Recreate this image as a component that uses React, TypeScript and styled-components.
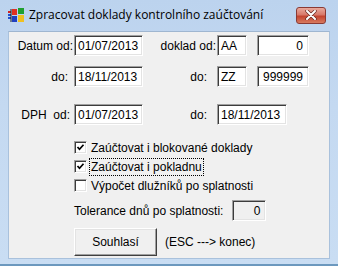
import React from 'react'
import styled, { createGlobalStyle } from 'styled-components'

const GlobalStyle = createGlobalStyle`
  html, body {
    margin: 0;
    padding: 0;
    background: #ffffff;
  }
`

const Window = styled.div`
  width: 338px;
  height: 266px;
  box-sizing: border-box;
  display: flex;
  flex-direction: column;
  background: linear-gradient(180deg, #bcd3ee 0%, #c4d9f1 40%, #c9ddf3 100%);
  border-bottom: 2px solid #6c98be;
  font-family: 'Liberation Sans', Arial, sans-serif;
  font-size: 12px;
  color: #000;
  overflow: hidden;
`

const TitleBar = styled.div`
  height: 31px;
  flex: none;
  display: flex;
  align-items: center;
  padding: 0 12px 0 8px;
  box-sizing: border-box;
`

const TitleText = styled.div`
  font-family: 'Open Sans', 'Noto Sans', sans-serif;
  font-size: 12px;
  margin-left: 4px;
  flex: 1;
  color: #000;
  margin-top: -2px;
`

const CloseButton = styled.div`
  width: 30px;
  height: 17px;
  margin-top: -1px;
  border-radius: 3px;
  border: 1px solid #8a3a34;
  box-sizing: border-box;
  background: linear-gradient(180deg, #e9a99c 0%, #d8796a 45%, #c4442f 55%, #d77a5f 100%);
  display: flex;
  align-items: center;
  justify-content: center;
`

const Client = styled.div`
  margin: 0 8px;
  height: 228px;
  background: #f0f0f0;
  border: 1px solid #a9c1dc;
  border-top-color: #9fb6d0;
  box-sizing: border-box;
  padding-top: 3px;
  display: flex;
  flex-direction: column;
`

const Row = styled.div<{ top?: number }>`
  display: flex;
  align-items: center;
  height: 21px;
  margin-top: ${({ top }) => top ?? 0}px;
`

const Label = styled.div<{ w: number; pad?: number }>`
  width: ${({ w }) => w}px;
  flex: none;
  text-align: right;
  padding-right: ${({ pad }) => pad ?? 1}px;
  box-sizing: border-box;
  white-space: pre;
`

const Field = styled.div<{ w: number; right?: boolean; disabled?: boolean; gap?: number }>`
  width: ${({ w }) => w}px;
  height: 21px;
  flex: none;
  margin-left: ${({ gap }) => gap ?? 0}px;
  box-sizing: border-box;
  border-style: solid;
  border-width: 1px;
  border-color: #a0a0a0 #ffffff #ffffff #a0a0a0;
  box-shadow: inset 1px 1px 0 #3c3c3c, inset -1px -1px 0 #e3e3e3;
  background: ${({ disabled }) => (disabled ? '#f0f0f0' : '#ffffff')};
  display: flex;
  align-items: center;
  justify-content: ${({ right }) => (right ? 'flex-end' : 'flex-start')};
  padding: 1px 4px 0 3px;
  padding-right: ${({ right }) => (right ? 5 : 3)}px;
`

const CheckRow = styled.div<{ top?: number }>`
  display: flex;
  align-items: center;
  height: 19px;
  padding-left: 65px;
  margin-top: ${({ top }) => top ?? 0}px;
`

const Box = styled.div`
  width: 13px;
  height: 13px;
  flex: none;
  box-sizing: border-box;
  border-style: solid;
  border-width: 1px;
  border-color: #a0a0a0 #ffffff #ffffff #a0a0a0;
  box-shadow: inset 1px 1px 0 #3c3c3c, inset -1px -1px 0 #e3e3e3;
  background: #fff;
  display: flex;
  align-items: center;
  justify-content: center;
`

const CheckText = styled.span<{ focused?: boolean }>`
  margin-left: 2px;
  padding: 1px 1px;
  border: 1px dotted ${({ focused }) => (focused ? '#000' : 'transparent')};
`

const PlainRow = styled.div<{ top?: number }>`
  display: flex;
  align-items: center;
  padding-left: 65px;
  margin-top: ${({ top }) => top ?? 0}px;
`

const Button = styled.div`
  width: 83px;
  height: 28px;
  box-sizing: border-box;
  background: #f0f0f0;
  border-style: solid;
  border-width: 1px;
  border-color: #ffffff #404040 #404040 #ffffff;
  box-shadow: inset -1px -1px 0 #a0a0a0, inset 1px 1px 0 #e3e3e3;
  display: flex;
  align-items: center;
  justify-content: center;
`

const Hint = styled.span`
  margin-left: 8px;
`

function AppIcon() {
  return (
    <svg width="17" height="15" viewBox="0 0 17 15">
      <rect x="0" y="3" width="3" height="2" fill="#d02020" />
      <rect x="0" y="6" width="3" height="2" fill="#2050d0" />
      <rect x="0" y="9" width="3" height="2" fill="#2050d0" />
      <rect x="4" y="1" width="5" height="6" fill="#e03020" />
      <rect x="10" y="0" width="6" height="6" fill="#20a030" />
      <rect x="4" y="8" width="5" height="6" fill="#2040c0" />
      <rect x="10" y="7" width="6" height="7" fill="#f0c020" />
      <path d="M3 1 L3 14" stroke="#202020" strokeWidth="1" />
    </svg>
  )
}

function Tick() {
  return (
    <svg width="9" height="9" viewBox="0 0 9 9">
      <path d="M1.5 4 L3.5 6.3 L7.5 1.8" fill="none" stroke="#000" strokeWidth="1.7" />
    </svg>
  )
}

function CloseX() {
  return (
    <svg width="12" height="10" viewBox="0 0 12 10">
      <path d="M2 1 L10 9 M10 1 L2 9" stroke="#6b2a22" strokeWidth="3.4" strokeLinecap="round" />
      <path d="M2 1 L10 9 M10 1 L2 9" stroke="#ffffff" strokeWidth="2" strokeLinecap="round" />
    </svg>
  )
}

export default function App() {
  return (
    <>
      <GlobalStyle />
      <Window>
        <TitleBar>
          <AppIcon />
          <TitleText>Zpracovat doklady kontrolního zaúčtování</TitleText>
          <CloseButton>
            <CloseX />
          </CloseButton>
        </TitleBar>
        <Client>
          <Row>
            <Label w={65}>Datum od:</Label>
            <Field w={69}>01/07/2013</Field>
            <Label w={74}>doklad od:</Label>
            <Field w={30}>AA</Field>
            <Field w={52} gap={10} right>
              0
            </Field>
          </Row>
          <Row top={10}>
            <Label w={65} pad={6}>do:</Label>
            <Field w={69}>18/11/2013</Field>
            <Label w={74} pad={10}>do:</Label>
            <Field w={30}>ZZ</Field>
            <Field w={52} gap={10} right>
              999999
            </Field>
          </Row>
          <Row top={17}>
            <Label w={65} pad={4}>{'DPH  od:'}</Label>
            <Field w={69}>01/07/2013</Field>
            <Label w={74} pad={10}>do:</Label>
            <Field w={70}>18/11/2013</Field>
          </Row>
          <CheckRow top={13}>
            <Box>
              <Tick />
            </Box>
            <CheckText>Zaúčtovat i blokované doklady</CheckText>
          </CheckRow>
          <CheckRow>
            <Box>
              <Tick />
            </Box>
            <CheckText focused>Zaúčtovat i pokladnu</CheckText>
          </CheckRow>
          <CheckRow>
            <Box />
            <CheckText>Výpočet dlužníků po splatnosti</CheckText>
          </CheckRow>
          <PlainRow top={5}>
            <span>Tolerance dnů po splatnosti:</span>
            <Field w={34} gap={9} right disabled>
              0
            </Field>
          </PlainRow>
          <PlainRow top={7}>
            <Button>Souhlasí</Button>
            <Hint>(ESC ---&gt; konec)</Hint>
          </PlainRow>
        </Client>
      </Window>
    </>
  )
}
